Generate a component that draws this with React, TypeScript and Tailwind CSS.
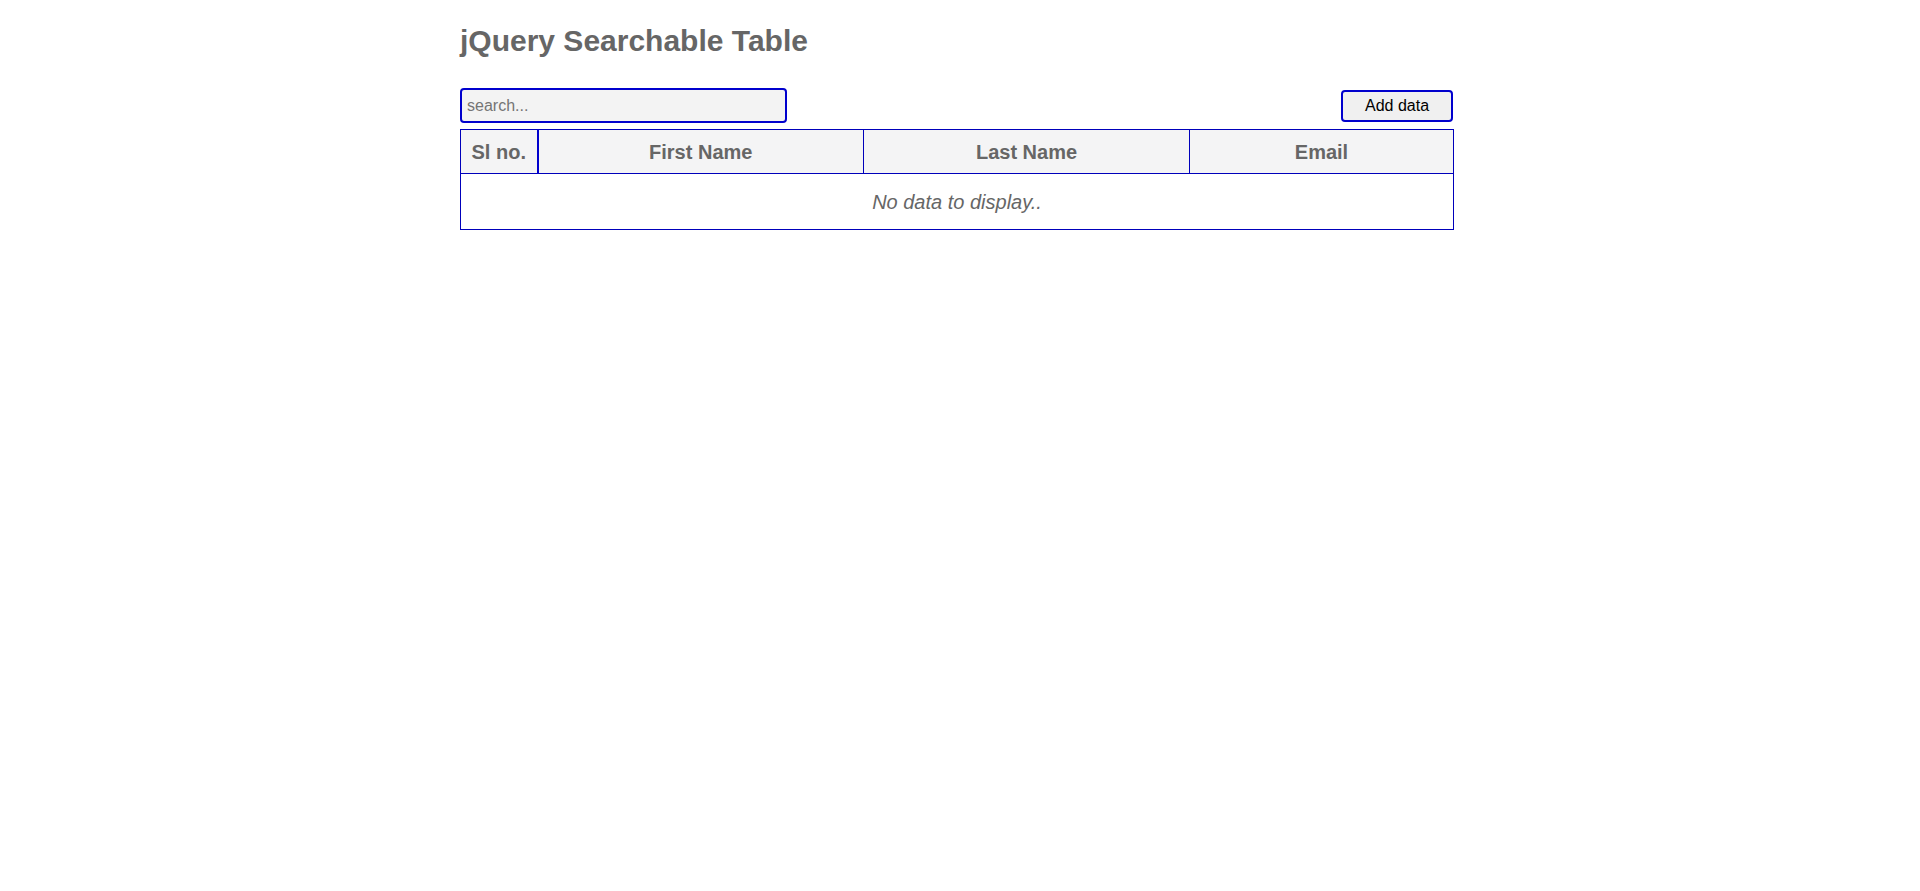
import React, { useState } from 'react';

const App: React.FC = () => {
  const [query, setQuery] = useState('');

  return (
    <div className="min-h-screen bg-white" style={{ fontFamily: '"Liberation Sans", Arial, sans-serif' }}>
      <div className="ml-[460px] w-[993px] pt-[24px]">
        <h1 className="text-[30px] font-bold leading-[34px] text-[#666666]">jQuery Searchable Table</h1>

        {/* Toolbar */}
        <div className="mt-[30px] flex items-center justify-between">
          <input
            type="text"
            value={query}
            onChange={(e) => setQuery(e.target.value)}
            placeholder="search..."
            className="h-[35px] w-[327px] rounded-[4px] border-2 border-[#0000cd] bg-[#f3f3f3] px-[5px] text-[16px] text-black outline-none placeholder:text-[#757575]"
          />
          <button className="h-[32px] w-[112px] rounded-[4px] border-2 border-[#0000cd] bg-[#f0f0f0] text-[16px] text-black">
            Add data
          </button>
        </div>

        {/* Table */}
        <table className="mt-[6px] w-[993px] table-fixed border-collapse border border-[#0000bb]">
          <colgroup>
            <col className="w-[77px]" />
            <col className="w-[326px]" />
            <col className="w-[326px]" />
            <col className="w-[264px]" />
          </colgroup>
          <thead>
            <tr className="h-[44px] bg-[#f4f4f5] text-[20px] font-bold text-[#666666]">
              <th className="border-r-2 border-[#0000cd] text-center">Sl no.</th>
              <th className="border-r border-[#0000bb] text-center">First Name</th>
              <th className="border-r border-[#0000bb] text-center">Last Name</th>
              <th className="text-center">Email</th>
            </tr>
          </thead>
          <tbody>
            <tr className="h-[56px] border-t border-[#0000bb]">
              <td colSpan={4} className="text-center text-[20px] italic text-[#666666]">
                No data to display..
              </td>
            </tr>
          </tbody>
        </table>
      </div>
    </div>
  );
};

export default App;
